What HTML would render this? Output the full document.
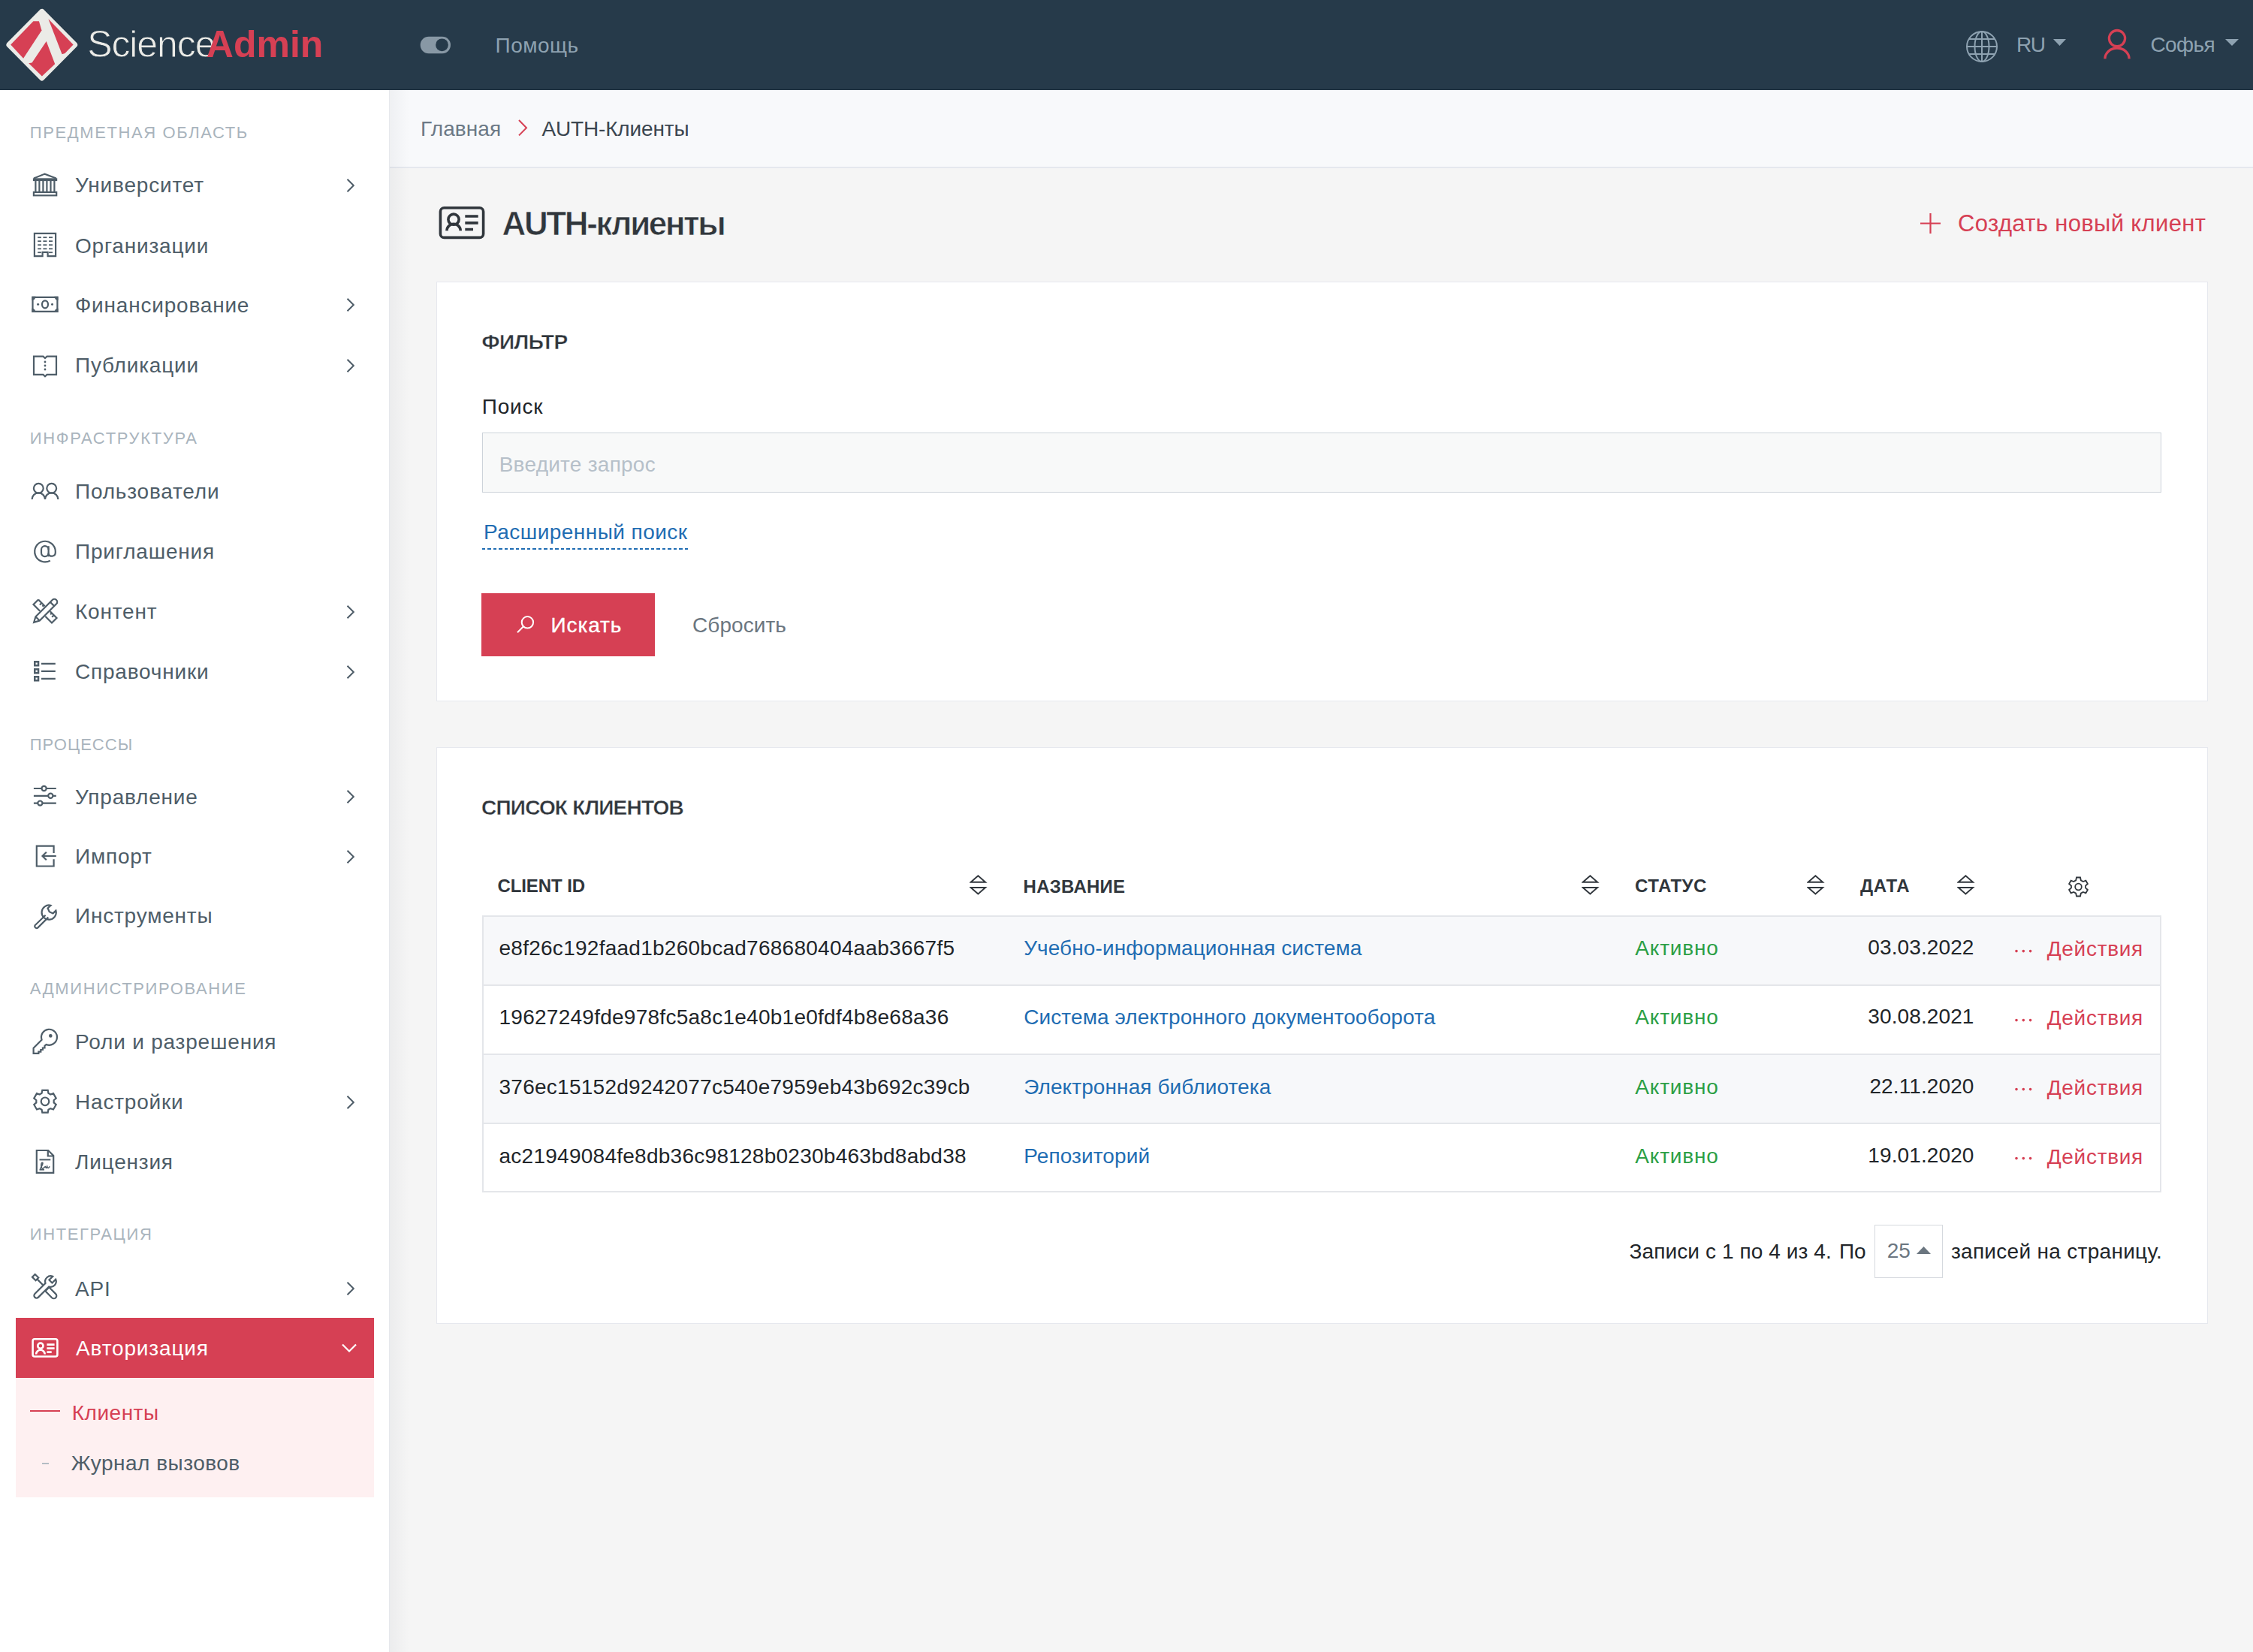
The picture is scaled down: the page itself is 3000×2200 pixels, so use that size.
<!DOCTYPE html>
<html><head><meta charset="utf-8"><title>AUTH-клиенты</title>
<style>
html,body{margin:0;padding:0;width:3000px;height:2200px;overflow:hidden;background:#f5f5f6}
body{position:relative;font-family:"Liberation Sans", sans-serif}
.t{position:absolute;white-space:pre;font-family:"Liberation Sans", sans-serif}
svg{display:block}
</style></head><body>
<div style="position:absolute;left:0px;top:0px;width:3000px;height:2200px;background:#f5f5f5"></div>
<div style="position:absolute;left:518px;top:120px;width:2482px;height:102px;background:#f8f9fb"></div>
<div style="position:absolute;left:518px;top:222px;width:2482px;height:2px;background:#e5e8ee"></div>
<div style="position:absolute;left:0px;top:120px;width:518px;height:2080px;background:#fff"></div>
<div style="position:absolute;left:518px;top:120px;width:1px;height:2080px;background:#e6e8ec"></div>
<div style="position:absolute;left:519px;top:120px;width:26px;height:2080px;background:linear-gradient(to right, rgba(30,40,60,0.045), rgba(30,40,60,0))"></div>
<div style="position:absolute;left:0px;top:0px;width:3000px;height:120px;background:#263a4a"></div>
<div style="position:absolute;left:0px;top:119px;width:3000px;height:1px;background:#1f3140"></div>
<svg style="position:absolute;left:0px;top:0px;" width="120" height="120" viewBox="0 0 120 120">
<path d="M55.8 12 Q57 11.5 58 12.6 L102.6 57.6 Q104 59.7 102.6 61.8 L58 106.8 Q55.8 108.6 53.6 106.8 L9 61.8 Q7.6 59.7 9 57.6 L53.6 12.6 Q54.8 11.5 55.8 12Z" fill="#ebebe7"/>
<path d="M14.2 59.5 L44.4 28.2 L51.9 28.2 L55.5 40.4 L31.1 77.7Z" fill="#d64054"/>
<path d="M64.4 25.3 L97.6 59.5 L86.5 71 L82.6 72.3Z" fill="#d64054"/>
<path d="M61.7 55 L73.2 85.2 L55.9 101.6 L38.2 84.3 L42.6 83.4Z" fill="#d64054"/>
</svg>
<div class="t" style="left:116.2px;top:33.9px;font-size:50px;line-height:50px;color:#ebebe7;font-weight:400;letter-spacing:-1.1px;-webkit-text-stroke:0.9px #263a4a">Science</div>
<div class="t" style="left:274.8px;top:33.9px;font-size:50px;line-height:50px;color:#d64054;font-weight:700;letter-spacing:0px;">Admin</div>
<svg style="position:absolute;left:558px;top:46px;" width="44" height="28" viewBox="0 0 44 28"><rect x="1.7" y="2.8" width="40.3" height="22.4" rx="11.2" fill="#8898a5"/><circle cx="30.5" cy="13.8" r="8.4" fill="#263a4a"/></svg>
<div class="t" style="left:659.5px;top:46.5px;font-size:28px;line-height:28px;color:#8ea2b1;font-weight:400;letter-spacing:0.5px;">Помощь</div>
<svg style="position:absolute;left:2614px;top:37px;" width="50" height="50" viewBox="0 0 50 50"><g fill="none" stroke="#8ea2b1" stroke-width="2">
<circle cx="25" cy="25" r="20"/><ellipse cx="25" cy="25" rx="9.5" ry="20"/><line x1="25" y1="5" x2="25" y2="45"/>
<line x1="5" y1="25" x2="45" y2="25"/><path d="M8 15 H42 M8 35 H42"/></g></svg>
<div class="t" style="left:2685.0px;top:46.1px;font-size:28px;line-height:28px;color:#8ea2b1;font-weight:400;letter-spacing:-1.5px;">RU</div>
<svg style="position:absolute;left:2734px;top:52px;" width="17" height="10" viewBox="0 0 17 10"><path d="M0 0 H17 L8.5 9Z" fill="#8ea2b1"/></svg>
<svg style="position:absolute;left:2798px;top:37px;" width="42" height="44" viewBox="0 0 42 44"><g fill="none" stroke="#d64054" stroke-width="3.3"><circle cx="21" cy="14.1" r="10.6"/><path d="M4.9 41.2 A16.1 14.2 0 0 1 37.1 41.2"/></g></svg>
<div class="t" style="left:2863.5px;top:46.1px;font-size:28px;line-height:28px;color:#8ea2b1;font-weight:400;letter-spacing:-0.6px;">Софья</div>
<svg style="position:absolute;left:2963px;top:52px;" width="18" height="10" viewBox="0 0 18 10"><path d="M0 0 H18 L9 9Z" fill="#8ea2b1"/></svg>
<div class="t" style="left:39.8px;top:166.4px;font-size:22px;line-height:22px;color:#a9b4bd;font-weight:400;letter-spacing:1.6px;">ПРЕДМЕТНАЯ ОБЛАСТЬ</div>
<div class="t" style="left:39.8px;top:572.8px;font-size:22px;line-height:22px;color:#a9b4bd;font-weight:400;letter-spacing:1.65px;">ИНФРАСТРУКТУРА</div>
<div class="t" style="left:39.8px;top:981.1px;font-size:22px;line-height:22px;color:#a9b4bd;font-weight:400;letter-spacing:1.0px;">ПРОЦЕССЫ</div>
<div class="t" style="left:39.8px;top:1306.4px;font-size:22px;line-height:22px;color:#a9b4bd;font-weight:400;letter-spacing:1.6px;">АДМИНИСТРИРОВАНИЕ</div>
<div class="t" style="left:39.8px;top:1633.2px;font-size:22px;line-height:22px;color:#a9b4bd;font-weight:400;letter-spacing:1.6px;">ИНТЕГРАЦИЯ</div>
<div class="t" style="left:100.0px;top:233.3px;font-size:28px;line-height:28px;color:#4e5d68;font-weight:400;letter-spacing:0.8px;">Университет</div>
<svg style="position:absolute;left:459px;top:237px;" width="16" height="20" viewBox="0 0 16 20"><path d="M3.5 1.8 L11.8 10 L3.5 18.2" fill="none" stroke="#4e5d68" stroke-width="2"/></svg>
<div class="t" style="left:100.0px;top:313.8px;font-size:28px;line-height:28px;color:#4e5d68;font-weight:400;letter-spacing:0.8px;">Организации</div>
<div class="t" style="left:100.0px;top:393.1px;font-size:28px;line-height:28px;color:#4e5d68;font-weight:400;letter-spacing:0.8px;">Финансирование</div>
<svg style="position:absolute;left:459px;top:396px;" width="16" height="20" viewBox="0 0 16 20"><path d="M3.5 1.8 L11.8 10 L3.5 18.2" fill="none" stroke="#4e5d68" stroke-width="2"/></svg>
<div class="t" style="left:100.0px;top:473.3px;font-size:28px;line-height:28px;color:#4e5d68;font-weight:400;letter-spacing:0.8px;">Публикации</div>
<svg style="position:absolute;left:459px;top:477px;" width="16" height="20" viewBox="0 0 16 20"><path d="M3.5 1.8 L11.8 10 L3.5 18.2" fill="none" stroke="#4e5d68" stroke-width="2"/></svg>
<div class="t" style="left:100.0px;top:641.3px;font-size:28px;line-height:28px;color:#4e5d68;font-weight:400;letter-spacing:0.8px;">Пользователи</div>
<div class="t" style="left:100.0px;top:721.0px;font-size:28px;line-height:28px;color:#4e5d68;font-weight:400;letter-spacing:0.8px;">Приглашения</div>
<div class="t" style="left:100.0px;top:801.3px;font-size:28px;line-height:28px;color:#4e5d68;font-weight:400;letter-spacing:0.8px;">Контент</div>
<svg style="position:absolute;left:459px;top:805px;" width="16" height="20" viewBox="0 0 16 20"><path d="M3.5 1.8 L11.8 10 L3.5 18.2" fill="none" stroke="#4e5d68" stroke-width="2"/></svg>
<div class="t" style="left:100.0px;top:881.3px;font-size:28px;line-height:28px;color:#4e5d68;font-weight:400;letter-spacing:0.8px;">Справочники</div>
<svg style="position:absolute;left:459px;top:885px;" width="16" height="20" viewBox="0 0 16 20"><path d="M3.5 1.8 L11.8 10 L3.5 18.2" fill="none" stroke="#4e5d68" stroke-width="2"/></svg>
<div class="t" style="left:100.0px;top:1047.7px;font-size:28px;line-height:28px;color:#4e5d68;font-weight:400;letter-spacing:0.8px;">Управление</div>
<svg style="position:absolute;left:459px;top:1051px;" width="16" height="20" viewBox="0 0 16 20"><path d="M3.5 1.8 L11.8 10 L3.5 18.2" fill="none" stroke="#4e5d68" stroke-width="2"/></svg>
<div class="t" style="left:100.0px;top:1127.3px;font-size:28px;line-height:28px;color:#4e5d68;font-weight:400;letter-spacing:0.8px;">Импорт</div>
<svg style="position:absolute;left:459px;top:1131px;" width="16" height="20" viewBox="0 0 16 20"><path d="M3.5 1.8 L11.8 10 L3.5 18.2" fill="none" stroke="#4e5d68" stroke-width="2"/></svg>
<div class="t" style="left:100.0px;top:1206.3px;font-size:28px;line-height:28px;color:#4e5d68;font-weight:400;letter-spacing:0.8px;">Инструменты</div>
<div class="t" style="left:100.0px;top:1374.3px;font-size:28px;line-height:28px;color:#4e5d68;font-weight:400;letter-spacing:0.8px;">Роли и разрешения</div>
<div class="t" style="left:100.0px;top:1454.3px;font-size:28px;line-height:28px;color:#4e5d68;font-weight:400;letter-spacing:0.8px;">Настройки</div>
<svg style="position:absolute;left:459px;top:1458px;" width="16" height="20" viewBox="0 0 16 20"><path d="M3.5 1.8 L11.8 10 L3.5 18.2" fill="none" stroke="#4e5d68" stroke-width="2"/></svg>
<div class="t" style="left:100.0px;top:1534.3px;font-size:28px;line-height:28px;color:#4e5d68;font-weight:400;letter-spacing:0.8px;">Лицензия</div>
<div class="t" style="left:100.0px;top:1702.6px;font-size:28px;line-height:28px;color:#4e5d68;font-weight:400;letter-spacing:0.8px;">API</div>
<svg style="position:absolute;left:459px;top:1706px;" width="16" height="20" viewBox="0 0 16 20"><path d="M3.5 1.8 L11.8 10 L3.5 18.2" fill="none" stroke="#4e5d68" stroke-width="2"/></svg>
<div style="position:absolute;left:21px;top:1755px;width:477px;height:80px;background:#d64054"></div>
<div class="t" style="left:101.0px;top:1782.3px;font-size:28px;line-height:28px;color:#fff;font-weight:400;letter-spacing:0.85px;">Авторизация</div>
<svg style="position:absolute;left:454px;top:1788px;" width="24" height="18" viewBox="0 0 24 18"><path d="M2 2.5 L11 11.5 L20 2.5" fill="none" stroke="#fff" stroke-width="2.2"/></svg>
<div style="position:absolute;left:21px;top:1835px;width:477px;height:159px;background:#fef0f1"></div>
<div style="position:absolute;left:40px;top:1878px;width:40px;height:2px;background:#d64054"></div>
<div class="t" style="left:95.8px;top:1867.8px;font-size:28px;line-height:28px;color:#d64054;font-weight:400;letter-spacing:0.5px;">Клиенты</div>
<div style="position:absolute;left:56px;top:1948px;width:9px;height:2px;background:#b3bcc4"></div>
<div class="t" style="left:94.7px;top:1935.0px;font-size:28px;line-height:28px;color:#4e5d68;font-weight:400;letter-spacing:0.5px;">Журнал вызовов</div>
<svg style="position:absolute;left:0;top:0" width="520" height="2200" viewBox="0 0 520 2200"><g fill="none" stroke="#4e5d68" stroke-width="2.2" stroke-linejoin="miter"><path d="M45 237.5 L59.6 231.6 L74.8 237.5"/><rect x="43.9" y="237.3" width="32.3" height="3.8" fill="#4e5d68" stroke="none"/><line x1="47.4" y1="241" x2="47.4" y2="255.5"/><line x1="52.4" y1="241" x2="52.4" y2="255.5"/><line x1="57.4" y1="241" x2="57.4" y2="255.5"/><line x1="62.4" y1="241" x2="62.4" y2="255.5"/><line x1="67.5" y1="241" x2="67.5" y2="255.5"/><line x1="72.4" y1="241" x2="72.4" y2="255.5"/><rect x="44.9" y="255.9" width="30.3" height="4.4"/><path d="M45.9 310.9 H74.1 V341.1 H63.6 V335.9 H56.6 V341.1 H45.9 Z"/></g><g fill="#4e5d68"><rect x="50.2" y="315.3" width="4.699999999999996" height="1.8"/><rect x="57.4" y="315.3" width="5.0" height="1.8"/><rect x="65.0" y="315.3" width="5.0" height="1.8"/><rect x="50.2" y="320.3" width="4.699999999999996" height="1.8"/><rect x="57.4" y="320.3" width="5.0" height="1.8"/><rect x="65.0" y="320.3" width="5.0" height="1.8"/><rect x="50.2" y="325.3" width="4.699999999999996" height="1.8"/><rect x="57.4" y="325.3" width="5.0" height="1.8"/><rect x="65.0" y="325.3" width="5.0" height="1.8"/><rect x="50.2" y="330.4" width="4.699999999999996" height="1.8"/><rect x="57.4" y="330.4" width="5.0" height="1.8"/><rect x="65.0" y="330.4" width="5.0" height="1.8"/><rect x="50.2" y="335.3" width="4.699999999999996" height="1.8"/><rect x="65.0" y="335.3" width="5.0" height="1.8"/></g><g fill="none" stroke="#4e5d68" stroke-width="2.2" stroke-linejoin="miter"><path d="M43.5 395.9 H76.4 V414.8 H43.5 Z"/></g><g fill="#4e5d68"><path d="M42.4 394.8 H47.5 A5 5 0 0 1 42.4 399.9Z"/><path d="M77.5 394.8 H72.4 A5 5 0 0 0 77.5 399.9Z"/><path d="M42.4 415.9 H47.5 A5 5 0 0 0 42.4 410.8Z"/><path d="M77.5 415.9 H72.4 A5 5 0 0 1 77.5 410.8Z"/><circle cx="50.6" cy="405.3" r="1.5"/><circle cx="69.5" cy="405.3" r="1.5"/></g><g fill="none" stroke="#4e5d68" stroke-width="2.2" stroke-linejoin="miter"><ellipse cx="60" cy="405.3" rx="4" ry="5"/><path d="M45 474.6 H57.5 L60 477 L62.5 474.6 H75 V498.9 H62.5 L60 501.2 L57.5 498.9 H45 Z"/></g><g fill="#4e5d68"><circle cx="60" cy="482" r="1.4"/><circle cx="60" cy="487" r="1.4"/><circle cx="60" cy="492" r="1.4"/></g><g fill="none" stroke="#4e5d68" stroke-width="2.2" stroke-linejoin="miter"><circle cx="51.3" cy="650.2" r="6.4"/><circle cx="68.7" cy="650.2" r="6.4"/><path d="M42.6 665 A8.7 8.7 0 0 1 60 665 A8.7 8.7 0 0 1 77.4 665"/><path d="M66.8 746.6 A13.8 13.8 0 1 1 73.8 734.2 V736 A4.8 4.8 0 0 1 64.8 738.2"/><path d="M64.6 727.2 V741.2"/><path d="M64.6 732 A4.6 4.6 0 0 0 55 732 V736.3 A4.6 4.6 0 0 0 64.6 736.3"/><g transform="translate(60,814) rotate(45)"><path d="M-17.3 -4.6 H-5 M5 -4.6 H17.3 V4.6 H5 M-5 4.6 H-17.3 V-4.6 M-11 -4.6 V-1 M-7 -4.6 V-2 M8 -4.6 V-2 M12 -4.6 V-1"/></g><g transform="translate(60,814) rotate(-45)"><path d="M-14 -3.8 H17.5 A3.8 3.8 0 0 1 17.5 3.8 H-14 L-21 0 Z" fill="#fff"/><path d="M13.5 -3.8 V3.8 M-14 -3.8 V3.8"/></g></g><g fill="#4e5d68"><path fill-rule="evenodd" d="M45 880 H52.3 V887.6 H45 Z M47.5 882.6 V885 H49.8 V882.6 Z M45 890 H52.3 V897.6 H45 Z M47.5 892.6 V895 H49.8 V892.6 Z M45 900 H52.3 V907.6 H45 Z M47.5 902.6 V905 H49.8 V902.6 Z"/></g><g fill="none" stroke="#4e5d68" stroke-width="2.2" stroke-linejoin="miter"><path d="M55 883.8 H73.8 M55 893.8 H73.8 M55 903.8 H73.8"/><path d="M44.9 1050 H55.4 M61.8 1050 H74.8 M44.9 1059.8 H64.1 M70.5 1059.8 H74.8 M44.9 1069.6 H50.2 M56.6 1069.6 H74.8"/><circle cx="58.6" cy="1050" r="3.1"/><circle cx="67.3" cy="1059.8" r="3.1"/><circle cx="53.4" cy="1069.6" r="3.1"/><path d="M71.6 1136 V1126.7 H48.8 V1153.5 H71.6 V1144.2"/><path d="M74.8 1140 H56.5 M61.8 1134.7 L56.5 1140 L61.8 1145.3"/><path d="M67.5 1205.8 A9.6 9.6 0 1 0 74.4 1212.6 L70.5 1216.4 L65.7 1214.2 L63.6 1209.5 Z"/><path d="M60.6 1218.8 L46.5 1232.3 A2.6 2.6 0 0 0 50 1235.8 L64.3 1221.6"/><path d="M55.6 1384.8 A10.5 10.5 0 1 1 61.6 1391 L59.5 1392.8 V1395.5 H56.9 V1398 H54.3 V1400.6 H51.4 V1402.8 H44.6 V1395.8 Z"/></g><circle cx="67.3" cy="1379.4" r="2.3" fill="#4e5d68"/><g fill="none" stroke="#4e5d68" stroke-width="2.2" stroke-linejoin="miter"><path d="M56.30 1451.95 L63.70 1451.95 L64.42 1455.86 L67.26 1457.50 L71.01 1456.17 L74.71 1462.58 L71.69 1465.16 L71.69 1468.44 L74.71 1471.02 L71.01 1477.43 L67.26 1476.10 L64.42 1477.74 L63.70 1481.65 L56.30 1481.65 L55.58 1477.74 L52.74 1476.10 L48.99 1477.43 L45.29 1471.02 L48.31 1468.44 L48.31 1465.16 L45.29 1462.58 L48.99 1456.17 L52.74 1457.50 L55.58 1455.86 Z"/><circle cx="60" cy="1466.8" r="5.3"/><path d="M48.8 1532 H64.2 L71.2 1539 V1561.8 H48.8 Z M63.8 1532.2 V1539.5 H71"/><path d="M52.5 1544.4 H67.3" stroke-width="2"/><path d="M53.4 1557.2 C55.5 1553 58.2 1548.3 56.4 1548.2 C54.4 1548.3 54.1 1556.5 57 1556.2 C58.5 1556 59.2 1553.6 60.5 1553.6 C61.2 1555.8 61.8 1556.2 62.8 1553.6 C63.5 1556.2 64.6 1556 66.2 1553.3" stroke-width="1.6"/><path d="M52.5 1557.8 H59" stroke-width="1.6"/><g transform="translate(60,1714) rotate(45)"><path d="M-21.5 -2.6 H-15 V2.6 H-21.5 Z M-15 0 H-4 M4 -3.6 H16.5 A3.6 3.6 0 0 1 16.5 3.6 H4 Z"/></g><g transform="translate(60,1714) rotate(-45)"><path d="M4 3.3 H-16 A3.3 3.3 0 0 1 -16 -3.3 H4 A7.3 7.3 0 0 1 17.24 -2.8 H10.5 V2.8 H17.24 A7.3 7.3 0 0 1 4 3.3 Z" fill="#fff"/></g></g><g fill="none" stroke="#fff" stroke-width="2.6"><rect x="43.6" y="1783.3" width="32.8" height="23.2" rx="2.5"/><circle cx="53.9" cy="1792.2" r="3.6"/><path d="M48.1 1803.6 A5.8 5.8 0 0 1 59.7 1803.6"/><path d="M62.4 1790.6 H72.6 M62.4 1795.6 H72.6 M62.4 1800.6 H68.7"/></g></svg>
<div class="t" style="left:560.0px;top:158.3px;font-size:28px;line-height:28px;color:#6c7986;font-weight:400;letter-spacing:0.1px;">Главная</div>
<svg style="position:absolute;left:688px;top:158px;" width="16" height="25" viewBox="0 0 16 25"><path d="M3 2 L13 12.2 L3 22.4" fill="none" stroke="#d64054" stroke-width="2"/></svg>
<div class="t" style="left:721.4px;top:158.3px;font-size:28px;line-height:28px;color:#3b4650;font-weight:400;letter-spacing:-0.15px;">AUTH-Клиенты</div>
<svg style="position:absolute;left:582px;top:272px;" width="66" height="49" viewBox="0 0 66 49"><g fill="none" stroke="#30363c" stroke-width="3.6"><rect x="4.4" y="4.8" width="57.2" height="39.6" rx="5"/>
<circle cx="22" cy="20.2" r="7.1"/><path d="M13 35.3 A9.1 9.1 0 0 1 31.2 35.3"/>
<path d="M37.3 16 H54.7 M37.3 24.9 H54.7 M37.3 33.5 H48"/></g></svg>
<div class="t" style="left:668.6px;top:276.1px;font-size:44px;line-height:44px;color:#30363c;font-weight:700;letter-spacing:-2.4px;-webkit-text-stroke:0.7px #f5f5f5">AUTH-клиенты</div>
<svg style="position:absolute;left:2555px;top:282px;" width="31" height="31" viewBox="0 0 31 31"><path d="M15.5 2 V29 M2 15.5 H29" stroke="#d64054" stroke-width="2.2"/></svg>
<div class="t" style="left:2607.1px;top:281.6px;font-size:31px;line-height:31px;color:#d64054;font-weight:400;letter-spacing:0.34px;">Создать новый клиент</div>
<div style="position:absolute;left:581px;top:375px;width:2359px;height:559px;background:#fff;border:1.5px solid #e6e8ee;box-sizing:border-box"></div>
<div class="t" style="left:641.4px;top:441.9px;font-size:28px;line-height:28px;color:#2f353b;font-weight:700;letter-spacing:-0.4px;-webkit-text-stroke:0.4px #fff">ФИЛЬТР</div>
<div class="t" style="left:641.8px;top:527.7px;font-size:28px;line-height:28px;color:#212529;font-weight:400;letter-spacing:0.8px;">Поиск</div>
<div style="position:absolute;left:641.5px;top:576px;width:2236.5px;height:80px;background:#f8f9f9;border:1.6px solid #cdd3da;box-sizing:border-box"></div>
<div class="t" style="left:664.7px;top:604.6px;font-size:28px;line-height:28px;color:#b6c0c9;font-weight:400;letter-spacing:0.25px;">Введите запрос</div>
<div class="t" style="left:644.1px;top:694.6px;font-size:28px;line-height:28px;color:#1f6db3;font-weight:400;letter-spacing:0.45px;">Расширенный поиск</div>
<div style="position:absolute;left:642px;top:729.5px;width:276px;height:2.0px;background:repeating-linear-gradient(to right,#1f6db3 0,#1f6db3 4.5px,transparent 4.5px,transparent 7.5px)"></div>
<div style="position:absolute;left:641px;top:790px;width:231px;height:84px;background:#d64054"></div>
<svg style="position:absolute;left:686px;top:818px;" width="28" height="27" viewBox="0 0 28 27"><g fill="none" stroke="#fff" stroke-width="2"><circle cx="16.4" cy="10.8" r="7.7"/><path d="M11 16.3 L3 24.3"/></g></svg>
<div class="t" style="left:733.5px;top:819.2px;font-size:28px;line-height:28px;color:#fff;font-weight:400;letter-spacing:0.9px;-webkit-text-stroke:0.35px #fff">Искать</div>
<div class="t" style="left:922.1px;top:819.2px;font-size:28px;line-height:28px;color:#6b7680;font-weight:400;letter-spacing:0.05px;">Сбросить</div>
<div style="position:absolute;left:581px;top:995px;width:2359px;height:768px;background:#fff;border:1.5px solid #e6e8ee;box-sizing:border-box"></div>
<div class="t" style="left:641.1px;top:1062.2px;font-size:28px;line-height:28px;color:#2f353b;font-weight:700;letter-spacing:-0.8px;-webkit-text-stroke:0.4px #fff">СПИСОК КЛИЕНТОВ</div>
<div class="t" style="left:662.5px;top:1168.2px;font-size:24px;line-height:24px;color:#30363c;font-weight:700;letter-spacing:-0.1px;">CLIENT ID</div>
<div class="t" style="left:1362.6px;top:1168.5px;font-size:24px;line-height:24px;color:#30363c;font-weight:700;letter-spacing:0.25px;">НАЗВАНИЕ</div>
<div class="t" style="left:2177.1px;top:1168.3px;font-size:24px;line-height:24px;color:#30363c;font-weight:700;letter-spacing:0.45px;">СТАТУС</div>
<div class="t" style="left:2477.1px;top:1168.3px;font-size:24px;line-height:24px;color:#30363c;font-weight:700;letter-spacing:0.6px;">ДАТА</div>
<svg style="position:absolute;left:1290.5px;top:1163px;" width="24" height="31" viewBox="0 0 24 31"><g fill="none" stroke="#30363c" stroke-width="1.9" stroke-linejoin="miter"><path d="M1.7 11.7 L11.4 3.3 L21.1 11.7 Z"/><path d="M1.7 19 L11.4 27.4 L21.1 19 Z"/></g></svg>
<svg style="position:absolute;left:2105.8px;top:1163px;" width="24" height="31" viewBox="0 0 24 31"><g fill="none" stroke="#30363c" stroke-width="1.9" stroke-linejoin="miter"><path d="M1.7 11.7 L11.4 3.3 L21.1 11.7 Z"/><path d="M1.7 19 L11.4 27.4 L21.1 19 Z"/></g></svg>
<svg style="position:absolute;left:2406px;top:1163px;" width="24" height="31" viewBox="0 0 24 31"><g fill="none" stroke="#30363c" stroke-width="1.9" stroke-linejoin="miter"><path d="M1.7 11.7 L11.4 3.3 L21.1 11.7 Z"/><path d="M1.7 19 L11.4 27.4 L21.1 19 Z"/></g></svg>
<svg style="position:absolute;left:2606px;top:1163px;" width="24" height="31" viewBox="0 0 24 31"><g fill="none" stroke="#30363c" stroke-width="1.9" stroke-linejoin="miter"><path d="M1.7 11.7 L11.4 3.3 L21.1 11.7 Z"/><path d="M1.7 19 L11.4 27.4 L21.1 19 Z"/></g></svg>
<svg style="position:absolute;left:2752px;top:1166px;" width="31" height="30" viewBox="0 0 31 30"><g fill="none" stroke="#30363c" stroke-width="1.8"><path d="M13 2.5 H18 L18.8 6.3 L21.8 8 L25.4 6.7 L27.9 11 L25 13.6 V16.4 L27.9 19 L25.4 23.3 L21.8 22 L18.8 23.7 L18 27.5 H13 L12.2 23.7 L9.2 22 L5.6 23.3 L3.1 19 L6 16.4 V13.6 L3.1 11 L5.6 6.7 L9.2 8 L12.2 6.3 Z"/><circle cx="15.5" cy="15" r="4.3"/></g></svg>
<div style="position:absolute;left:641.5px;top:1219px;width:2236.5px;height:368.5px;border:2px solid #e4e6ea;box-sizing:border-box"></div>
<div style="position:absolute;left:643.5px;top:1221.0px;width:2232.5px;height:90.0px;background:#f7f8fa"></div>
<div class="t" style="left:664.5px;top:1249.3px;font-size:28px;line-height:28px;color:#212529;font-weight:400;letter-spacing:0.26px;">e8f26c192faad1b260bcad768680404aab3667f5</div>
<div class="t" style="left:1363.2px;top:1249.3px;font-size:28px;line-height:28px;color:#1f6db3;font-weight:400;letter-spacing:0.1px;">Учебно-информационная система</div>
<div class="t" style="left:2177.3px;top:1249.3px;font-size:28px;line-height:28px;color:#2c9f45;font-weight:400;letter-spacing:0.8px;">Активно</div>
<div class="t" style="right:371.5px;top:1248.3px;font-size:28px;line-height:28px;color:#212529;letter-spacing:0.1px">03.03.2022</div>
<svg style="position:absolute;left:2682px;top:1264px;" width="25" height="6" viewBox="0 0 25 6"><g fill="#d64054"><circle cx="3" cy="2.6" r="1.8"/><circle cx="12.3" cy="2.6" r="1.8"/><circle cx="21.6" cy="2.6" r="1.8"/></g></svg>
<div class="t" style="left:2725.7px;top:1250.3px;font-size:28px;line-height:28px;color:#d64054;font-weight:400;letter-spacing:0.7px;">Действия</div>
<div style="position:absolute;left:641.5px;top:1311.1px;width:2236.5px;height:2.0px;background:#e4e6ea"></div>
<div class="t" style="left:664.5px;top:1341.4px;font-size:28px;line-height:28px;color:#212529;font-weight:400;letter-spacing:0.26px;">19627249fde978fc5a8c1e40b1e0fdf4b8e68a36</div>
<div class="t" style="left:1363.2px;top:1341.4px;font-size:28px;line-height:28px;color:#1f6db3;font-weight:400;letter-spacing:0.1px;">Система электронного документооборота</div>
<div class="t" style="left:2177.3px;top:1341.4px;font-size:28px;line-height:28px;color:#2c9f45;font-weight:400;letter-spacing:0.8px;">Активно</div>
<div class="t" style="right:371.5px;top:1340.4px;font-size:28px;line-height:28px;color:#212529;letter-spacing:0.1px">30.08.2021</div>
<svg style="position:absolute;left:2682px;top:1356px;" width="25" height="6" viewBox="0 0 25 6"><g fill="#d64054"><circle cx="3" cy="2.6" r="1.8"/><circle cx="12.3" cy="2.6" r="1.8"/><circle cx="21.6" cy="2.6" r="1.8"/></g></svg>
<div class="t" style="left:2725.7px;top:1342.4px;font-size:28px;line-height:28px;color:#d64054;font-weight:400;letter-spacing:0.7px;">Действия</div>
<div style="position:absolute;left:643.5px;top:1405.2px;width:2232.5px;height:90.0px;background:#f7f8fa"></div>
<div style="position:absolute;left:641.5px;top:1403.2px;width:2236.5px;height:2.0px;background:#e4e6ea"></div>
<div class="t" style="left:664.5px;top:1433.5px;font-size:28px;line-height:28px;color:#212529;font-weight:400;letter-spacing:0.26px;">376ec15152d9242077c540e7959eb43b692c39cb</div>
<div class="t" style="left:1363.2px;top:1433.5px;font-size:28px;line-height:28px;color:#1f6db3;font-weight:400;letter-spacing:0.1px;">Электронная библиотека</div>
<div class="t" style="left:2177.3px;top:1433.5px;font-size:28px;line-height:28px;color:#2c9f45;font-weight:400;letter-spacing:0.8px;">Активно</div>
<div class="t" style="right:371.5px;top:1432.5px;font-size:28px;line-height:28px;color:#212529;letter-spacing:0.1px">22.11.2020</div>
<svg style="position:absolute;left:2682px;top:1448px;" width="25" height="6" viewBox="0 0 25 6"><g fill="#d64054"><circle cx="3" cy="2.6" r="1.8"/><circle cx="12.3" cy="2.6" r="1.8"/><circle cx="21.6" cy="2.6" r="1.8"/></g></svg>
<div class="t" style="left:2725.7px;top:1434.5px;font-size:28px;line-height:28px;color:#d64054;font-weight:400;letter-spacing:0.7px;">Действия</div>
<div style="position:absolute;left:641.5px;top:1495.3px;width:2236.5px;height:2.0px;background:#e4e6ea"></div>
<div class="t" style="left:664.5px;top:1525.6px;font-size:28px;line-height:28px;color:#212529;font-weight:400;letter-spacing:0.26px;">ac21949084fe8db36c98128b0230b463bd8abd38</div>
<div class="t" style="left:1363.2px;top:1525.6px;font-size:28px;line-height:28px;color:#1f6db3;font-weight:400;letter-spacing:0.1px;">Репозиторий</div>
<div class="t" style="left:2177.3px;top:1525.6px;font-size:28px;line-height:28px;color:#2c9f45;font-weight:400;letter-spacing:0.8px;">Активно</div>
<div class="t" style="right:371.5px;top:1524.6px;font-size:28px;line-height:28px;color:#212529;letter-spacing:0.1px">19.01.2020</div>
<svg style="position:absolute;left:2682px;top:1540px;" width="25" height="6" viewBox="0 0 25 6"><g fill="#d64054"><circle cx="3" cy="2.6" r="1.8"/><circle cx="12.3" cy="2.6" r="1.8"/><circle cx="21.6" cy="2.6" r="1.8"/></g></svg>
<div class="t" style="left:2725.7px;top:1526.6px;font-size:28px;line-height:28px;color:#d64054;font-weight:400;letter-spacing:0.7px;">Действия</div>
<div class="t" style="left:2169.5px;top:1653.3px;font-size:28px;line-height:28px;color:#212529;font-weight:400;letter-spacing:0.1px;">Записи с 1 по 4 из 4.</div>
<div class="t" style="left:2448.9px;top:1653.3px;font-size:28px;line-height:28px;color:#212529;font-weight:400;letter-spacing:0px;">По</div>
<div style="position:absolute;left:2496px;top:1630.5px;width:91px;height:71.5px;border:1.6px solid #d5d9de;box-sizing:border-box;background:#fff"></div>
<div class="t" style="left:2512.8px;top:1652.3px;font-size:28px;line-height:28px;color:#6b7680;font-weight:400;letter-spacing:0px;">25</div>
<svg style="position:absolute;left:2552px;top:1659px;" width="19" height="12" viewBox="0 0 19 12"><path d="M0 11 L9.5 1 L19 11Z" fill="#6b7680"/></svg>
<div class="t" style="left:2597.9px;top:1653.3px;font-size:28px;line-height:28px;color:#212529;font-weight:400;letter-spacing:0.3px;">записей на страницу.</div>
</body></html>
